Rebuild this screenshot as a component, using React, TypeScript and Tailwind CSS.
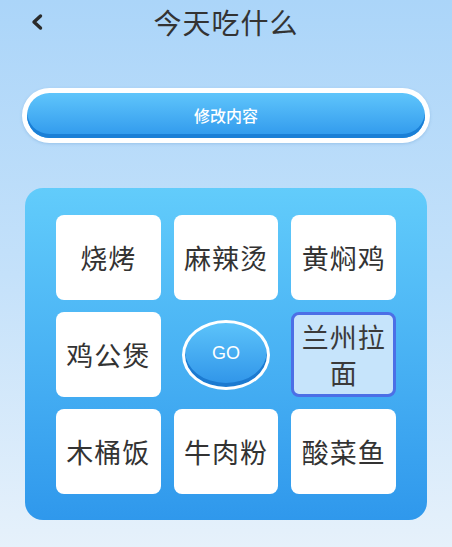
import { useState } from "react"

const foods = ["烧烤", "麻辣烫", "黄焖鸡", "鸡公煲", "GO", "兰州拉面", "木桶饭", "牛肉粉", "酸菜鱼"]

function BackIcon() {
  return (
    <svg width="18" height="18" viewBox="0 0 18 18" fill="none">
      <path d="M12.5 3 L6 9 L12.5 15" stroke="#2b2b2b" strokeWidth="3.4" strokeLinecap="round" strokeLinejoin="round" />
    </svg>
  )
}

export default function App() {
  const [picked] = useState("兰州拉面")

  return (
    <div
      className="w-full h-[547px] overflow-hidden flex flex-col bg-gradient-to-b from-[#abd5f9] via-[#c4e1fa] to-[#e6f1fb]"
      style={{ fontFamily: '"Noto Sans CJK SC", "Noto Sans", sans-serif' }}
    >
      {/* header */}
      <div className="grid grid-cols-[1fr_auto_1fr] items-center h-[44px] px-[28px]">
        <button className="justify-self-start">
          <BackIcon />
        </button>
        <h1 className="text-[28px] text-[#333] tracking-[1px] leading-none -mt-[1px]">今天吃什么</h1>
        <div />
      </div>

      {/* edit button */}
      <div className="mx-[22px] mt-[44px] rounded-full bg-white p-[5px] shadow-[0_1px_3px_rgba(80,140,200,0.3)]">
        <button className="w-full h-[45px] rounded-full bg-gradient-to-b from-[#5fc5fb] to-[#2e98ec] shadow-[inset_0_-4px_0_#1a7fd6] text-white text-[16px] font-medium pb-[2px]">
          修改内容
        </button>
      </div>

      {/* board */}
      <div className="mx-[25px] mt-[45px] rounded-[18px] bg-gradient-to-b from-[#62ccfb] to-[#2f98ec] pt-[27px] pb-[26px] px-[31px]">
        <div className="grid grid-cols-3 gap-x-[13px] gap-y-[12px]">
          {foods.map((f) =>
            f === "GO" ? (
              <div key={f} className="h-[85px] flex items-center justify-center">
                <button
                  className="w-[88px] h-[70px] rounded-[50%] border-[3px] border-white bg-gradient-to-b from-[#5cc3fa] to-[#2e93e8] shadow-[inset_0_-4px_0_#1c7ad0] text-white text-[18px] pb-[2px]"
                  style={{ fontFamily: '"Liberation Sans", Arial, sans-serif' }}
                >
                  GO
                </button>
              </div>
            ) : f === picked ? (
              <div
                key={f}
                className="h-[85px] rounded-[8px] bg-[#c6e4fb] border-[3px] border-[#4c6fe6] flex items-center justify-center px-[4px] text-center text-[27px] tracking-[1px] leading-[36px] text-[#3a3a3a]"
              >
                {f}
              </div>
            ) : (
              <div
                key={f}
                className="h-[85px] rounded-[8px] bg-white flex items-center justify-center text-center text-[27px] tracking-[1px] leading-[36px] text-[#333]"
              >
                {f}
              </div>
            ),
          )}
        </div>
      </div>
    </div>
  )
}
